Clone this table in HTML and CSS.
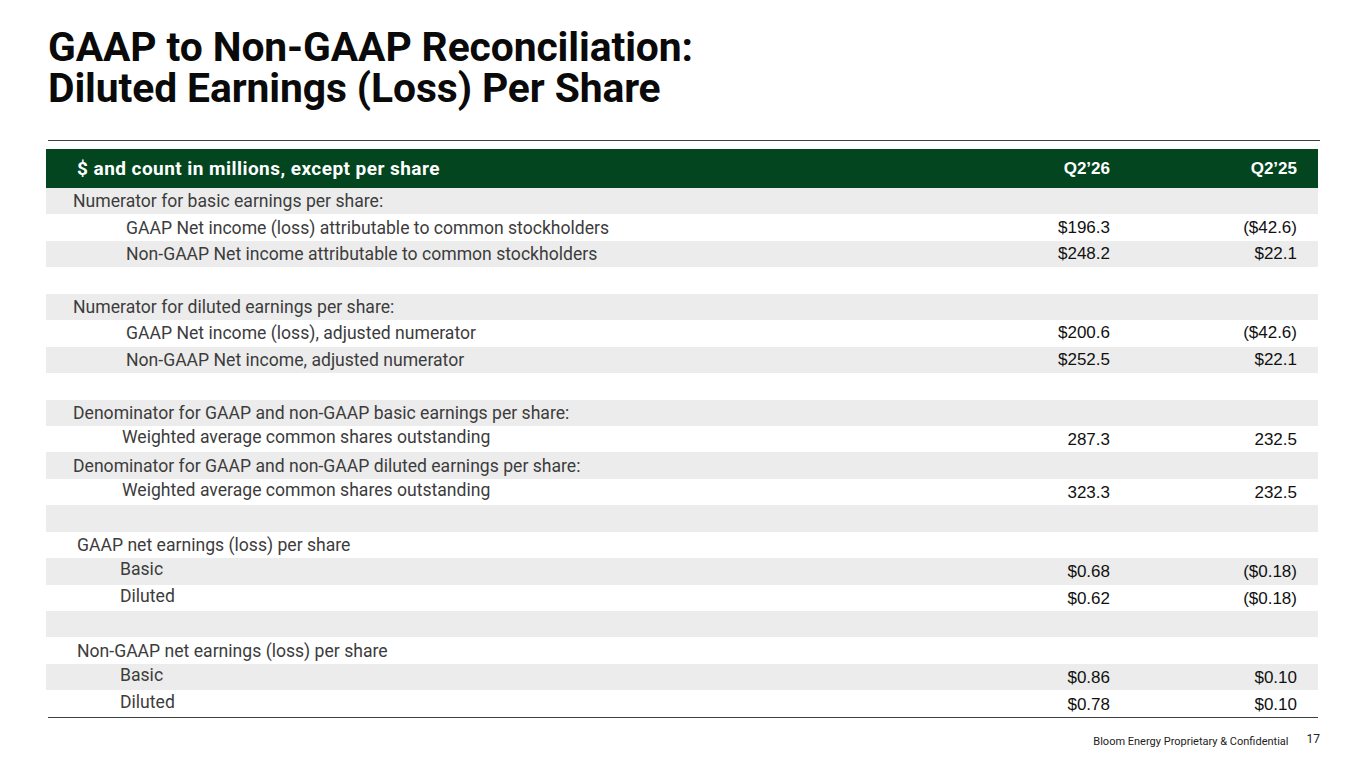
FILE: index.html
```html
<!DOCTYPE html>
<html>
<head>
<meta charset="utf-8">
<link rel="stylesheet" href="styles.css">
</head>
<body>
<div class="slide">
  <h1 class="title"><span class="tline">GAAP to Non-GAAP Reconciliation:</span><span class="tline">Diluted Earnings (Loss) Per Share</span></h1>
  <div class="rule"></div>
  <div class="table">
    <div class="row head">
      <div class="hlab">$ and count in millions, except per share</div>
      <div class="hval">Q2’26</div>
      <div class="hval">Q2’25</div>
    </div>
    <div class="row g"><div class="lab l0">Numerator for basic earnings per share:</div><div class="val"></div><div class="val"></div></div>
    <div class="row"><div class="lab l1">GAAP Net income (loss) attributable to common stockholders</div><div class="val">$196.3</div><div class="val">($42.6)</div></div>
    <div class="row g"><div class="lab l1">Non-GAAP Net income attributable to common stockholders</div><div class="val">$248.2</div><div class="val">$22.1</div></div>
    <div class="row"><div class="lab"></div><div class="val"></div><div class="val"></div></div>
    <div class="row g"><div class="lab l0">Numerator for diluted earnings per share:</div><div class="val"></div><div class="val"></div></div>
    <div class="row"><div class="lab l1">GAAP Net income (loss), adjusted numerator</div><div class="val">$200.6</div><div class="val">($42.6)</div></div>
    <div class="row g"><div class="lab l1">Non-GAAP Net income, adjusted numerator</div><div class="val">$252.5</div><div class="val">$22.1</div></div>
    <div class="row"><div class="lab"></div><div class="val"></div><div class="val"></div></div>
    <div class="row g"><div class="lab l0">Denominator for GAAP and non-GAAP basic earnings per share:</div><div class="val"></div><div class="val"></div></div>
    <div class="row"><div class="lab l2 up">Weighted average common shares outstanding</div><div class="val dn">287.3</div><div class="val dn">232.5</div></div>
    <div class="row g"><div class="lab l0">Denominator for GAAP and non-GAAP diluted earnings per share:</div><div class="val"></div><div class="val"></div></div>
    <div class="row"><div class="lab l2 up">Weighted average common shares outstanding</div><div class="val dn">323.3</div><div class="val dn">232.5</div></div>
    <div class="row g"><div class="lab"></div><div class="val"></div><div class="val"></div></div>
    <div class="row"><div class="lab l0b">GAAP net earnings (loss) per share</div><div class="val"></div><div class="val"></div></div>
    <div class="row g"><div class="lab l3 up">Basic</div><div class="val dn">$0.68</div><div class="val dn">($0.18)</div></div>
    <div class="row"><div class="lab l3 up">Diluted</div><div class="val dn">$0.62</div><div class="val dn">($0.18)</div></div>
    <div class="row g"><div class="lab"></div><div class="val"></div><div class="val"></div></div>
    <div class="row"><div class="lab l0b">Non-GAAP net earnings (loss) per share</div><div class="val"></div><div class="val"></div></div>
    <div class="row g"><div class="lab l3 up">Basic</div><div class="val dn">$0.86</div><div class="val dn">$0.10</div></div>
    <div class="row"><div class="lab l3 up">Diluted</div><div class="val dn">$0.78</div><div class="val dn">$0.10</div></div>
  </div>
  <div class="brule"></div>
  <div class="footer">
    <span class="conf">Bloom Energy Proprietary &amp; Confidential</span>
    <span class="page">17</span>
  </div>
</div>
</body>
</html>
```

FILE: styles.css
```css
html, body {
  margin: 0;
  padding: 0;
  background: #ffffff;
}
.slide {
  width: 1365px;
  height: 768px;
  overflow: hidden;
  font-family: Roboto, "Liberation Sans", sans-serif;
  color: #3a3a3a;
}
.title {
  margin: 27px 0 0 48px;
  font-family: Roboto, "Liberation Sans", sans-serif;
  font-weight: 700;
  font-size: 40.8px;
  letter-spacing: -0.1px;
  color: #0a0a0a;
}
.tline {
  display: block;
  height: 41px;
  line-height: 41px;
}
.rule {
  margin: 31px 0 0 48px;
  width: 1272px;
  height: 1px;
  background: #404040;
}
.table {
  margin: 8px 0 0 46px;
  width: 1272px;
}
.row {
  display: grid;
  grid-template-columns: 1fr 150px 187px;
  padding-right: 21px;
  height: 26.45px;
  align-items: center;
  background: #ffffff;
}
.row.g {
  background: #ececec;
}
.row.head {
  height: 39px;
  background: #02451f;
}
.brule {
  margin: 0 0 0 48px;
  width: 1270px;
  height: 1px;
  background: #404040;
}
.hlab {
  padding-left: 31px;
  color: #ffffff;
  font-family: Roboto, "Liberation Sans", sans-serif;
  font-weight: 700;
  font-size: 19px;
  letter-spacing: 0.45px;
  white-space: nowrap;
}
.hval {
  text-align: right;
  color: #ffffff;
  font-family: "Liberation Sans", Arial, sans-serif;
  font-weight: 700;
  font-size: 17px;
}
.lab {
  font-size: 17.6px;
  color: #3c3c3c;
  white-space: nowrap;
}
.l0 { padding-left: 27px; }
.l0b { padding-left: 31px; }
.l1 { padding-left: 80px; }
.l2 { padding-left: 76px; }
.l3 { padding-left: 74px; }
.up { position: relative; top: -2px; }
.val {
  text-align: right;
  font-family: "Liberation Sans", Arial, sans-serif;
  font-size: 17px;
  color: #111111;
}
.dn { position: relative; top: 1px; }
.footer {
  display: flex;
  justify-content: flex-end;
  align-items: baseline;
  gap: 18px;
  margin: 16px 0 0 0;
  width: 1320px;
}
.conf {
  font-size: 11px;
  color: #222222;
}
.page {
  font-size: 12px;
  color: #222222;
  position: relative;
  top: -2px;
}
```
